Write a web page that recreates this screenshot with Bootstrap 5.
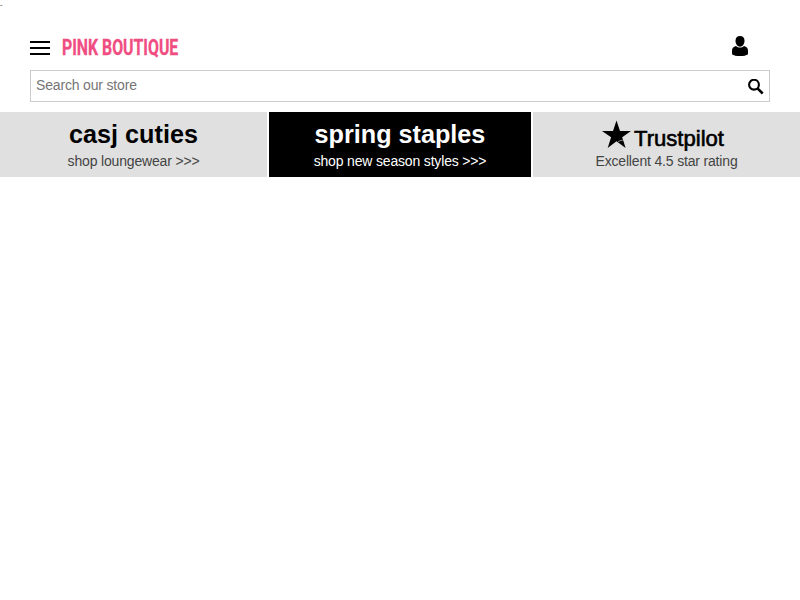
<!DOCTYPE html>
<html lang="en">
<head>
  <meta charset="UTF-8" />
  <meta name="viewport" content="width=device-width, initial-scale=1" />
  <title>Pink Boutique</title>
  <link href="https://cdn.jsdelivr.net/npm/bootstrap@5.3.3/dist/css/bootstrap.min.css" rel="stylesheet" />
  <style>
    body {
      font-family: "Liberation Sans", Arial, sans-serif;
      font-size: 14px;
      line-height: 20px;
      letter-spacing: -.17px;
      color: #444;
      background: #fff;
    }
    svg text {
      letter-spacing: 0;
    }
    .pixel-note {
      height: 34px;
      font-size: 8px;
      line-height: 9px;
    }
    .site-header {
      padding: 0 30px;
    }
    .header-bar {
      height: 26px;
      margin-bottom: 10px;
    }
    .menu-btn {
      width: 20px;
      height: 14px;
      margin: 1px 12px 0 0;
    }
    .menu-btn span {
      height: 2px;
      background: #000;
    }
    .account-link {
      margin: -2px 22px 0 0;
    }
    .search-form {
      height: 32px;
      border: 1px solid #ccc;
    }
    .search-form .form-control {
      padding: 0 5px 2px;
      font-size: 14px;
      letter-spacing: -.17px;
    }
    .search-form .form-control::placeholder {
      color: #757575;
    }
    .search-form .btn {
      padding: 1px 5px 0 0;
    }
    .promos {
      display: grid;
      grid-template-columns: 267px 262px 267px;
      gap: 2px;
      height: 65px;
      margin-top: 10px;
    }
    .promo {
      background: #e0e0e0;
      padding-top: 7px;
      color: #444;
    }
    .promo h2 {
      margin: 0;
      height: 32px;
      font-size: 25.2px;
      line-height: 30px;
      letter-spacing: 0;
      font-weight: 700;
      color: #000;
    }
    .promo-dark,
    .promo-dark h2 {
      background: #000;
      color: #fff;
    }
  </style>
</head>
<body>

  <div class="pixel-note">-</div>

  <header class="site-header">
    <div class="header-bar d-flex align-items-center">
      <button class="menu-btn btn border-0 rounded-0 p-0 d-flex flex-column justify-content-between" aria-label="Menu">
        <span class="w-100"></span>
        <span class="w-100"></span>
        <span class="w-100"></span>
      </button>
      <a href="#" class="d-flex" aria-label="Pink Boutique">
        <svg width="170" height="30" viewBox="0 0 170 30">
          <text transform="scale(.75 1)" x="0" y="23" textLength="155" lengthAdjust="spacingAndGlyphs" font-family="Roboto, sans-serif" font-weight="700" font-size="22" fill="#f04e82" stroke="#f04e82" stroke-width=".3">PINK BOUTIQUE</text>
        </svg>
      </a>
      <a href="#" class="account-link d-flex ms-auto" aria-label="Account">
        <svg width="16" height="20" viewBox="0 0 16 20">
          <path d="M8 0C5 0 3.500 1.900 3.500 4.800 3.500 8.200 5.500 10.700 8 10.700s4.500-2.500 4.500-5.900C12.500 1.900 11 0 8 0z" />
          <path d="M4 10C1.200 10.800 0 12 0 15v3.200C1.500 19.500 4.500 20 8 20s6.500-.5 8-1.800V15c0-3-1.200-4.200-4-5C10.700 11.100 9.500 11.500 8 11.500S5.300 11.100 4 10z" />
        </svg>
      </a>
    </div>

    <form class="search-form d-flex align-items-center">
      <input type="text" class="form-control border-0 rounded-0 shadow-none h-100" placeholder="Search our store" />
      <button type="button" class="btn border-0 d-flex" aria-label="Search">
        <svg width="16" height="16" viewBox="0 0 16 16" fill="none" stroke="#000">
          <circle cx="6" cy="5.700" r="4.900" stroke-width="2.100" />
          <path d="M9.500 9.300L14.700 14.500" stroke-width="2.500" />
        </svg>
      </button>
    </form>
  </header>

  <section class="promos text-center">
    <div class="promo">
      <h2>casj cuties</h2>
      <div>shop loungewear &gt;&gt;&gt;</div>
    </div>
    <div class="promo promo-dark">
      <h2>spring staples</h2>
      <div>shop new season styles &gt;&gt;&gt;</div>
    </div>
    <div class="promo">
      <h2>
        <svg class="d-block mx-auto" width="132" height="32" viewBox="0 0 132 32">
          <path d="M15.500 1.500L19 12H30L21.200 18.300 24.600 29 15.500 22.300 6.700 29 10.100 18.300 1 12h11z" />
          <path d="M17 22.500L22 20.900" stroke="#e0e0e0" stroke-width=".6" />
          <text x="33" y="27" textLength="90" lengthAdjust="spacingAndGlyphs" font-family="Liberation Sans, Arial, sans-serif" font-weight="400" font-size="21.500" stroke="#000" stroke-width=".6">Trustpilot</text>
        </svg>
      </h2>
      <div>Excellent 4.5 star rating</div>
    </div>
  </section>

  <script src="https://cdn.jsdelivr.net/npm/bootstrap@5.3.3/dist/js/bootstrap.bundle.min.js"></script>
</body>
</html>
